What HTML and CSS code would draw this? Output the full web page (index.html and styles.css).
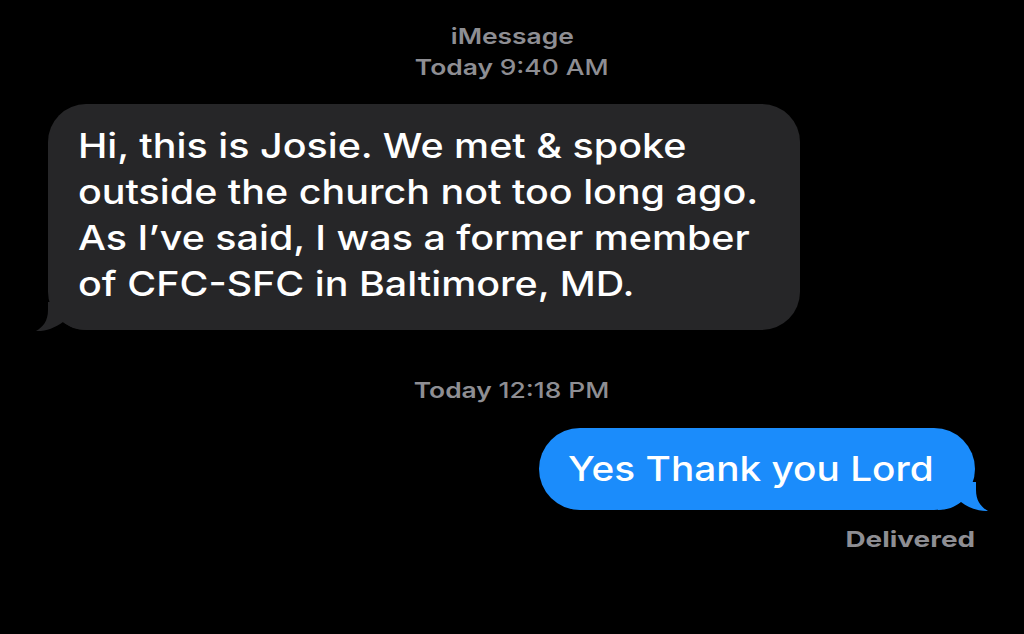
FILE: index.html
```html
<!DOCTYPE html>
<html>
<head>
<meta charset="utf-8">
<link rel="stylesheet" href="styles.css">
</head>
<body>
<div class="thread">
  <div class="stamp stamp-top">
    <div><span class="wide wide-c">iMessage</span></div>
    <div><span class="wide wide-c">Today <span class="time">9:40 AM</span></span></div>
  </div>
  <div class="row row-in">
    <div class="bubble in">
      <span class="wide wide-l">Hi, this is Josie. We met &amp; spoke<br>outside the church not too long ago.<br>As I’ve said, I was a former member<br>of CFC-SFC in Baltimore, MD.</span>
      <svg class="tail tail-in" width="50" height="30" viewBox="0 0 50 30"><path d="M12 0 L12 8 C12 19 7 25 0 29 C9 29.5 19 26 27 20 C33 25 41 28 50 28 L50 0 Z" fill="#262628"/></svg>
    </div>
  </div>
  <div class="stamp stamp-mid"><span class="wide wide-c">Today <span class="time">12:18 PM</span></span></div>
  <div class="row row-out">
    <div class="bubble out">
      <span class="wide wide-l">Yes Thank you Lord</span>
      <svg class="tail tail-out" width="50" height="30" viewBox="0 0 50 30"><path d="M38 0 L38 8 C38 19 43 25 50 29 C41 29.5 31 26 23 20 C17 25 9 28 0 28 L0 0 Z" fill="#1b8cfb"/></svg>
    </div>
  </div>
  <div class="delivered"><span class="wide wide-r">Delivered</span></div>
</div>
</body>
</html>
```

FILE: styles.css
```css
html, body {
  margin: 0;
  padding: 0;
  background: #000;
  height: 100%;
}
body {
  font-family: Inter, "Noto Sans", sans-serif;
  -webkit-font-smoothing: antialiased;
}
.thread {
  display: flex;
  flex-direction: column;
  width: 1024px;
  height: 634px;
  overflow: hidden;
}
.wide {
  display: inline-block;
  transform: scaleX(1.2);
}
.wide-c { transform-origin: center top; }
.wide-l { transform-origin: left top; }
.wide-r { transform-origin: right top; }
.stamp {
  color: #8e8e93;
  font-size: 22px;
  font-weight: 600;
  line-height: 31px;
  text-align: center;
}
.stamp .time { font-weight: 500; }
.stamp-top { padding-top: 21px; }
.stamp-mid { margin-top: 45px; }
.row { display: flex; }
.row-in { justify-content: flex-start; padding-left: 48px; margin-top: 21px; }
.row-out { justify-content: flex-end; padding-right: 49px; margin-top: 22px; }
.bubble {
  position: relative;
  color: #fff;
  font-size: 34px;
  line-height: 46px;
  font-weight: 500;
  box-sizing: border-box;
}
.bubble .wide { transform: scaleX(1.16); }
.bubble.in {
  background: #262628;
  width: 752px;
  height: 226px;
  padding: 19px 0 0 30px;
  border-radius: 38px;
}
.bubble.out {
  background: #1b8cfb;
  width: 436px;
  height: 82px;
  padding: 18px 0 0 29px;
  border-radius: 41px;
}
.bubble.out .wide { transform: scaleX(1.14); }
.tail { position: absolute; bottom: -2px; }
.tail-in { left: -12px; }
.tail-out { right: -13px; }
.delivered {
  align-self: flex-end;
  margin-right: 49px;
  margin-top: 14px;
  color: #8e8e93;
  font-size: 22px;
  font-weight: 700;
  line-height: 31px;
}
.delivered .wide { transform: scaleX(1.27); }
```
